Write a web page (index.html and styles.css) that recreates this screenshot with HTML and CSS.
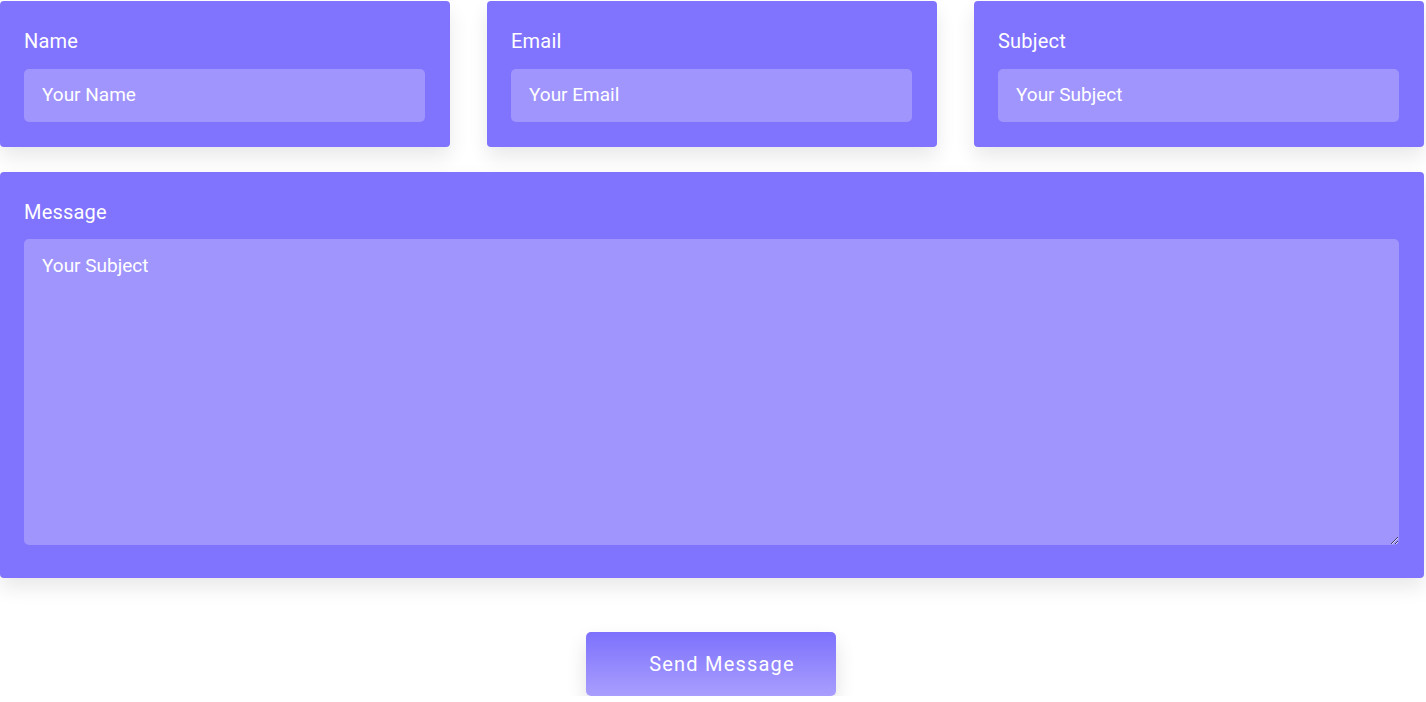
FILE: index.html
```html
<!DOCTYPE html>
<html lang="en">
<head>
    <meta charset="UTF-8">
    <meta name="viewport" content="width=device-width, initial-scale=1.0">
    <title>Contact</title>
    <link rel="stylesheet" href="styles.css">
</head>
<body>
    <form class="contact-form">
        <div class="row">
            <div class="field-card">
                <label for="name">Name</label>
                <input type="text" id="name" placeholder="Your Name">
            </div>
            <div class="field-card">
                <label for="email">Email</label>
                <input type="text" id="email" placeholder="Your Email">
            </div>
            <div class="field-card">
                <label for="subject">Subject</label>
                <input type="text" id="subject" placeholder="Your Subject">
            </div>
        </div>

        <div class="field-card message-card">
            <label for="message">Message</label>
            <textarea id="message" placeholder="Your Subject"></textarea>
        </div>

        <div class="actions">
            <button type="button" class="send-button">Send Message</button>
        </div>
    </form>
</body>
</html>
```

FILE: styles.css
```css
body {
    font-family: Roboto, "Liberation Sans", sans-serif;
    background-color: #ffffff;
    margin: 0;
    padding: 0;
}

.contact-form {
    width: 1423.5px;
    padding-top: 1px;
}

.row {
    display: grid;
    grid-template-columns: repeat(3, 1fr);
    gap: 37.5px;
    margin-bottom: 25px;
}

.field-card {
    background-color: #8073fe;
    border-radius: 4px;
    padding: 24px 25px 25px 24px;
    display: flex;
    flex-direction: column;
    box-shadow: 0 10px 20px rgba(0, 0, 0, 0.09);
}

.field-card label {
    color: #ffffff;
    font-size: 20px;
    line-height: 32px;
    letter-spacing: 0.2px;
    margin-bottom: 12px;
}

input[type="text"], textarea {
    font-family: Roboto, "Liberation Sans", sans-serif;
    font-size: 19px;
    line-height: 21px;
    color: #ffffff;
    background-color: #a095fd;
    border: none;
    border-radius: 5px;
    padding: 16px 18px;
    width: 100%;
    box-sizing: border-box;
    outline: none;
}

input[type="text"] {
    padding: 15px 18px 17px;
}

input::placeholder, textarea::placeholder {
    color: #ffffff;
    opacity: 1;
}

.message-card {
    padding-bottom: 33px;
}

.message-card label {
    margin-bottom: 11px;
}

textarea {
    height: 306px;
    resize: vertical;
    display: block;
}

.actions {
    display: flex;
    justify-content: center;
    padding-top: 54px;
    padding-right: 1.5px;
}

.send-button {
    width: 250px;
    height: 64px;
    border: none;
    border-radius: 5px;
    background: linear-gradient(to bottom, #7d71fd, #a99efd);
    color: #ffffff;
    font-family: Roboto, "Liberation Sans", sans-serif;
    font-size: 20px;
    letter-spacing: 1.2px;
    padding-left: 28px;
    cursor: pointer;
    box-shadow: 0 10px 20px rgba(0, 0, 0, 0.12);
}
```
